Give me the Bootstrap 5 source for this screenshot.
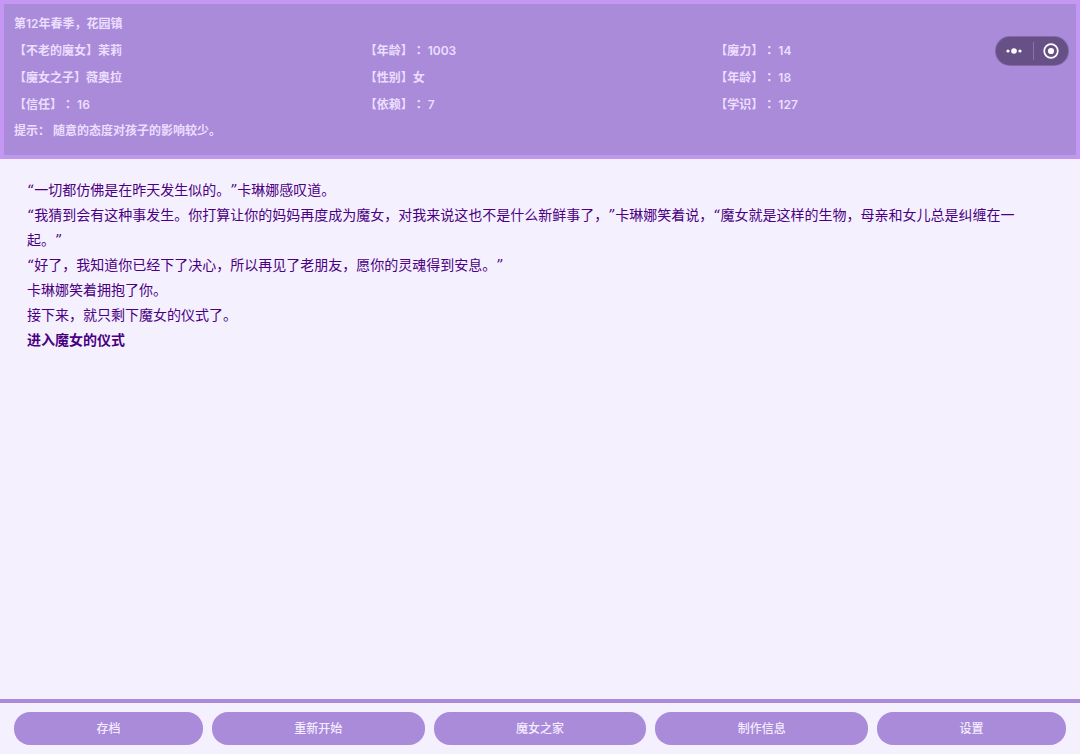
<!DOCTYPE html>
<html lang="zh-CN">
<head>
<meta charset="utf-8">
<meta name="viewport" content="width=device-width, initial-scale=1">
<title>不老的魔女</title>
<link href="https://cdn.jsdelivr.net/npm/bootstrap@5.3.0/dist/css/bootstrap.min.css" rel="stylesheet">
<style>
  :root { --violet: #a98bd9; --lilac: #c497f3; --mist: #f4f0fe; --ink: #4b0082; }
  body {
    font-family: Inter, "Noto Sans CJK SC", sans-serif;
    font-size: 14px;
    line-height: 25px;
    text-spacing-trim: space-all;
    color: var(--ink);
    background: var(--mist);
  }
  .status-panel {
    padding: 6px 10px 12px;
    border: 4px solid var(--lilac);
    border-bottom-color: #bd98ec;
    background: var(--violet);
    color: #ecdeff;
    font-size: 12px;
    font-weight: 600;
    line-height: 27px;
  }
  .hint { line-height: 25px; }
  .sep { font-family: "Noto Sans CJK TC", sans-serif; line-height: 1; }
  .capsule {
    top: 37px;
    right: 12px;
    height: 28px;
    width: 72px;
    border-radius: 14px;
    background: #665086;
    box-shadow: 0 0 0 1px #8069a6;
  }
  .capsule button { background: none; color: #fff; line-height: 0; }
  .capsule .rule { width: 1px; height: 18px; background: #8873a4; }
  .story { padding: 19px 40px 19px 27px; font-family: "DejaVu Serif", "Noto Sans CJK SC", sans-serif; }
  .story a { color: var(--ink); font-weight: 700; }
  .toolbar { gap: 9px; padding: 9px 14px; border-top: 4px solid var(--violet); }
  .toolbar .btn {
    height: 33px;
    padding: 0 12px;
    border: 0;
    border-radius: 16px;
    background: var(--violet);
    color: #f4ebff;
    font-size: 12px;
    font-weight: 500;
  }
</style>
</head>
<body class="d-flex flex-column min-vh-100">
  <header class="status-panel">
    <div>第12年春季，花园镇</div>
    <div class="row g-0">
      <div class="col-4">【不老的魔女】茉莉</div>
      <div class="col-4">【年龄】<span class="sep" lang="zh-TW">：</span> 1003</div>
      <div class="col-4">【魔力】<span class="sep" lang="zh-TW">：</span> 14</div>
      <div class="col-4">【魔女之子】薇奥拉</div>
      <div class="col-4">【性别】女</div>
      <div class="col-4">【年龄】<span class="sep" lang="zh-TW">：</span> 18</div>
      <div class="col-4">【信任】<span class="sep" lang="zh-TW">：</span> 16</div>
      <div class="col-4">【依赖】<span class="sep" lang="zh-TW">：</span> 7</div>
      <div class="col-4">【学识】<span class="sep" lang="zh-TW">：</span> 127</div>
    </div>
    <div class="hint">提示： 随意的态度对孩子的影响较少。</div>
  </header>

  <div class="capsule position-absolute d-flex align-items-center">
    <button type="button" class="border-0 p-0 flex-fill" aria-label="更多">
      <svg width="18" height="8" viewBox="0 0 18 8" fill="currentColor"><circle cx="3" cy="4" r="1.6"/><circle cx="9" cy="4" r="2.8"/><circle cx="15" cy="4" r="1.6"/></svg>
    </button>
    <span class="rule"></span>
    <button type="button" class="border-0 p-0 flex-fill" aria-label="关闭">
      <svg width="16" height="16" viewBox="0 0 16 16"><circle cx="8" cy="8" r="6.8" fill="none" stroke="currentColor" stroke-width="1.7"/><circle cx="8" cy="8" r="3.1" fill="currentColor"/></svg>
    </button>
  </div>

  <main class="story flex-grow-1">
    <p class="m-0">“一切都仿佛是在昨天发生似的。”卡琳娜感叹道。</p>
    <p class="m-0">“我猜到会有这种事发生。你打算让你的妈妈再度成为魔女，对我来说这也不是什么新鲜事了，”卡琳娜笑着说，“魔女就是这样的生物，母亲和女儿总是纠缠在一起。”</p>
    <p class="m-0">“好了，我知道你已经下了决心，所以再见了老朋友，愿你的灵魂得到安息。”</p>
    <p class="m-0">卡琳娜笑着拥抱了你。</p>
    <p class="m-0">接下来，就只剩下魔女的仪式了。</p>
    <a href="#" class="text-decoration-none">进入魔女的仪式</a>
  </main>

  <footer class="toolbar d-flex">
    <button type="button" class="btn flex-grow-1">存档</button>
    <button type="button" class="btn flex-grow-1">重新开始</button>
    <button type="button" class="btn flex-grow-1">魔女之家</button>
    <button type="button" class="btn flex-grow-1">制作信息</button>
    <button type="button" class="btn flex-grow-1">设置</button>
  </footer>
<script src="https://cdn.jsdelivr.net/npm/bootstrap@5.3.0/dist/js/bootstrap.bundle.min.js"></script>
</body>
</html>
